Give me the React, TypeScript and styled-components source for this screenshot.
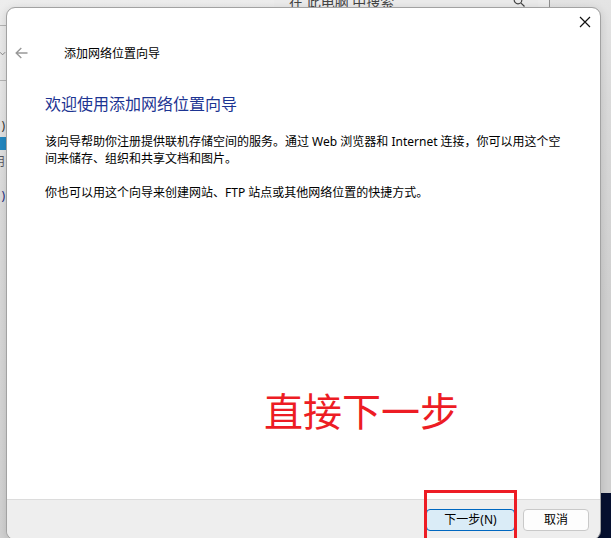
import React from "react";
import styled, { createGlobalStyle } from "styled-components";

const GlobalStyle = createGlobalStyle`
  * { box-sizing: border-box; }
  body {
    margin: 0;
    font-family: "Noto Sans", "Noto Sans CJK SC", sans-serif;
    font-size: 12px;
    line-height: 17px;
    color: #000;
  }
  button { font: inherit; color: inherit; padding: 0; }
  h1, h2, p { margin: 0; font-weight: 400; }
`;

const Desktop = styled.div`
  position: relative;
  display: flex;
  flex-direction: column;
  height: 100vh;
  overflow: hidden;
  background: linear-gradient(#e4e4e4, #dadada 100px, #d0d0d0 300px, #d0d0d0);
`;

const Wallpaper = styled.div`
  position: absolute;
  right: 0;
  bottom: 0;
  width: 24px;
  height: 45px;
  background: #06102f;
`;

const Explorer = styled.div`
  position: absolute;
  top: 0;
  left: 0;
  right: 61px;
  bottom: 0;
  border-right: 1px solid #8f8f8f;
  background: linear-gradient(#ededed, #e8e8e8 80px, #dcdcdc 200px, #d2d2d2);
`;

const SearchField = styled.label`
  position: absolute;
  top: -12px;
  left: 274px;
  right: 11px;
  height: 28px;
  display: flex;
  align-items: center;
  justify-content: space-between;
  padding: 0 13px 0 15px;
  background: #ebebeb;
  color: #555;

  input {
    flex: 1;
    min-width: 0;
    border: 0;
    padding: 0;
    background: none;
    font: inherit;
    font-size: 14px;
    line-height: 20px;
    color: #555;
  }
  input::placeholder { color: #444; opacity: 1; }
`;

const Sidebar = styled.div`
  position: absolute;
  top: 25px;
  left: 0;
  width: 7px;
`;

const SidebarRow = styled.div<{ $height: number; $selected?: boolean; $color?: string; $ruled?: boolean }>`
  display: flex;
  align-items: center;
  justify-content: flex-end;
  height: ${(p) => p.$height}px;
  padding-right: ${(p) => (p.$ruled ? 1 : 2)}px;
  border-top: ${(p) => (p.$ruled ? "1px solid #b4b4b4" : "0")};
  background: ${(p) => (p.$selected ? "#2488c0" : "none")};
  color: ${(p) => p.$color ?? "#333"};
`;

const Dialog = styled.section`
  position: relative;
  flex: 1 0 auto;
  display: flex;
  flex-direction: column;
  margin: 7px 10px -2px 6px;
  border: 1px solid #a2a2a2;
  border-radius: 9px;
  overflow: hidden;
  background: #fff;
  background-clip: padding-box;
  box-shadow: 0 2px 10px rgba(0, 0, 0, 0.14);
`;

const TitleBar = styled.div`
  display: flex;
  justify-content: flex-end;
  height: 30px;
`;

const IconButton = styled.button<{ $width: number }>`
  display: flex;
  align-items: center;
  justify-content: center;
  width: ${(p) => p.$width}px;
  height: 28px;
  border: 0;
  background: none;
`;

const Header = styled.header`
  display: flex;
  align-items: center;
  gap: 29px;
  height: 30px;

  h1 { font-size: 12px; }
`;

const Content = styled.main`
  flex: 1;
  display: flex;
  flex-direction: column;
  gap: 17px;
  padding: 24px 32px 0 38px;

  h2 {
    font-size: 16px;
    line-height: 24px;
    color: #1c3492;
  }
`;

const Note = styled.p`
  position: absolute;
  top: 373px;
  left: 257px;
  font-size: 39px;
  line-height: 60px;
  color: #ed1c24;
  white-space: nowrap;
`;

const Footer = styled.footer`
  display: flex;
  justify-content: flex-end;
  gap: 8px;
  height: 40px;
  padding: 9px 11px 0;
  border-top: 1px solid #dcdcdc;
  background: #eee;
`;

const Highlighted = styled.div`
  position: relative;
  display: flex;

  &::after {
    content: "";
    position: absolute;
    top: -19px;
    left: -2px;
    right: -2px;
    height: 48px;
    border: 3px solid #ed1c24;
    pointer-events: none;
  }
`;

const PushButton = styled.button<{ $primary?: boolean }>`
  width: ${(p) => (p.$primary ? 89 : 66)}px;
  height: 22px;
  border: 1px solid ${(p) => (p.$primary ? "#0067c0" : "#c9c9c9")};
  border-radius: 4px;
  background: ${(p) => (p.$primary ? "#daecf7" : "#fdfdfd")};
  line-height: 18px;
`;

export default function App() {
  return (
    <Desktop>
      <GlobalStyle />
      <Wallpaper />
      <Explorer>
        <SearchField>
          <input type="text" placeholder="在 此电脑 中搜索" aria-label="在 此电脑 中搜索" />
          <svg width="12" height="12" viewBox="0 0 12 12" fill="none" stroke="#444" strokeWidth="1.2">
            <circle cx="5" cy="4" r="3.8" />
            <path d="M7.8 6.8 11.5 10.5" />
          </svg>
        </SearchField>
        <Sidebar>
          <SidebarRow $height={55} $ruled>
            <svg width="7" height="5" viewBox="0 0 7 5" fill="none" stroke="#777">
              <path d="M0 1 3 4 6 1" />
            </svg>
          </SidebarRow>
          <SidebarRow $height={34} $ruled />
          <SidebarRow $height={23}>)</SidebarRow>
          <SidebarRow $height={13} $selected />
          <SidebarRow $height={22} $color="#55555f">用</SidebarRow>
          <SidebarRow $height={46} $color="#1d2a80">)</SidebarRow>
        </Sidebar>
      </Explorer>
      <Dialog role="dialog" aria-labelledby="wizard-title">
        <TitleBar>
          <IconButton $width={30} aria-label="关闭">
            <svg width="12" height="12" viewBox="0 0 12 12" fill="none" stroke="#111" strokeWidth="1.2">
              <path d="M1 1 11 11M11 1 1 11" />
            </svg>
          </IconButton>
        </TitleBar>
        <Header>
          <IconButton $width={28} aria-label="返回" disabled>
            <svg width="13" height="12" viewBox="0 0 13 12" fill="none" stroke="#999" strokeWidth="1.4">
              <path d="M6.3 1 1.2 6 6.3 11M1.2 6H12.5" />
            </svg>
          </IconButton>
          <h1 id="wizard-title">添加网络位置向导</h1>
        </Header>
        <Content>
          <h2>欢迎使用添加网络位置向导</h2>
          <p>
            该向导帮助你注册提供联机存储空间的服务。通过 Web 浏览器和 Internet 连接，你可以用这个空间来储存、组织和共享文档和图片。
          </p>
          <p>你也可以用这个向导来创建网站、FTP 站点或其他网络位置的快捷方式。</p>
        </Content>
        <Note>直接下一步</Note>
        <Footer>
          <Highlighted>
            <PushButton $primary>下一步(N)</PushButton>
          </Highlighted>
          <PushButton>取消</PushButton>
        </Footer>
      </Dialog>
    </Desktop>
  );
}
